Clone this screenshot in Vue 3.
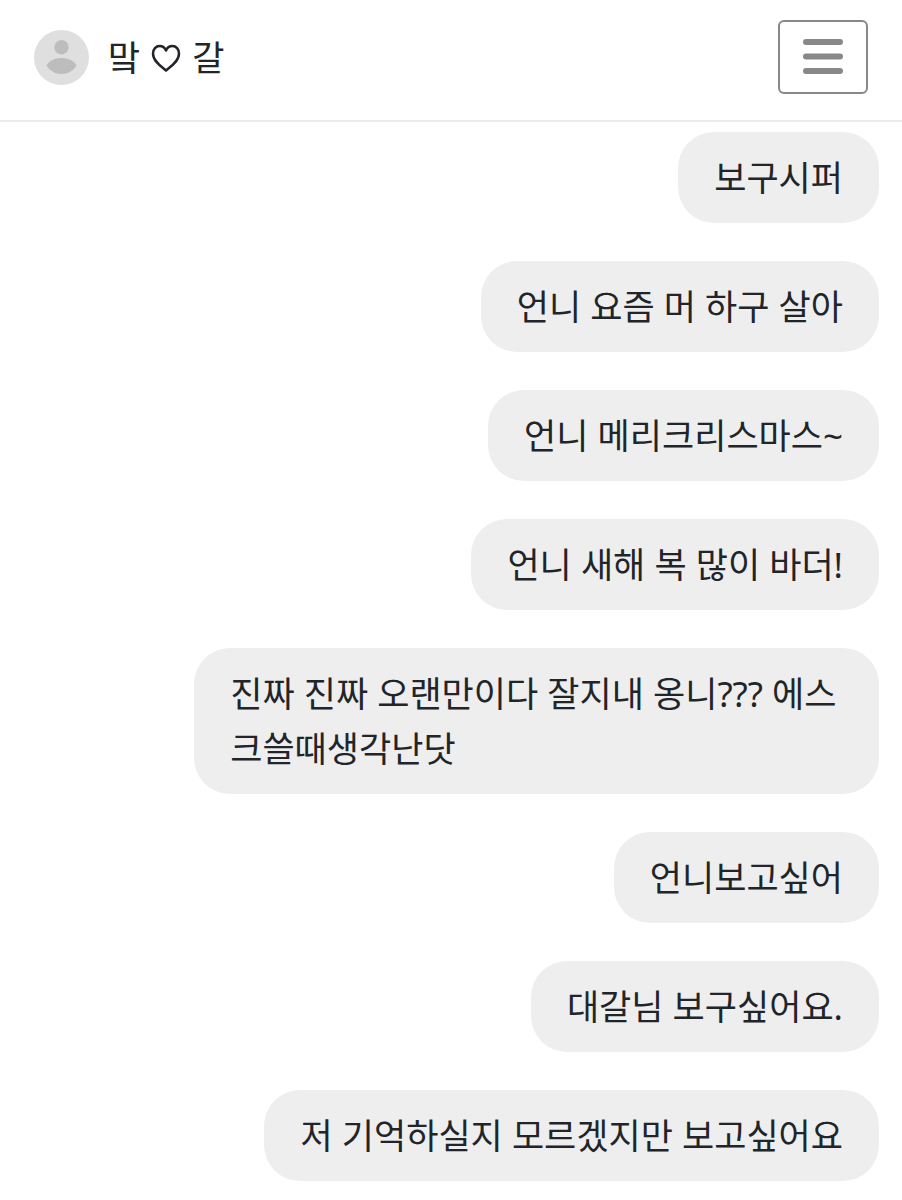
<script setup>
const messages = [
  '보구시퍼',
  '언니 요즘 머 하구 살아',
  '언니 메리크리스마스~',
  '언니 새해 복 많이 바더!',
  '진짜 진짜 오랜만이다 잘지내 옹니??? 에스크쓸때생각난닷',
  '언니보고싶어',
  '대갈님 보구싶어요.',
  '저 기억하실지 모르겠지만 보고싶어요',
]
</script>

<template>
  <div class="page">
    <header class="topbar">
      <div class="profile">
        <svg class="avatar" viewBox="0 0 55 55" aria-hidden="true">
          <circle cx="27.5" cy="27.5" r="27.5" fill="#dfdfdf" />
          <circle cx="27.5" cy="17.2" r="7.2" fill="#bdbdbd" />
          <path d="M12.500 35.500C15 30.500 21 28 27.500 28S40 30.500 42.500 35.500C39 41 34 44 27.500 44S16 41 12.500 35.500Z" fill="#bdbdbd" />
        </svg>
        <h1 class="name">
          <span>맠</span>
          <svg class="heart" viewBox="0 0 30 30" role="img" aria-label="♡">
            <path d="M15 28.500C11 25 2 19.500 2 11.500C2 7 5 4 8.500 4C11.500 4 14 6 15 8.500C16 6 18.500 4 21.500 4C25 4 28 7 28 11.500C28 19.500 19 25 15 28.500Z" />
          </svg>
          <span>갈</span>
        </h1>
      </div>
      <button class="menu" type="button" aria-label="메뉴">
        <svg viewBox="0 0 40 36" aria-hidden="true">
          <path d="M3 3H37M3 17.500H37M3 32H37" />
        </svg>
      </button>
    </header>
    <main class="thread">
      <p v-for="message in messages" :key="message" class="bubble">{{ message }}</p>
    </main>
  </div>
</template>

<style>
body {
  background: #fff;
}
</style>

<style scoped>
.page {
  font-family: "Noto Sans", "Noto Sans CJK KR", sans-serif;
  color: #212529;
}
.topbar {
  display: flex;
  align-items: center;
  justify-content: space-between;
  padding: 20px 34px 26px;
  border-bottom: 2px solid #ebebeb;
}
.profile {
  display: flex;
  align-items: center;
  gap: 19px;
}
.avatar {
  width: 55px;
  height: 55px;
}
.name {
  display: flex;
  align-items: center;
  gap: 11px;
  margin: 0;
  font-size: 35px;
  font-weight: 400;
  line-height: 55px;
}
.heart {
  width: 30px;
  height: 30px;
  fill: none;
  stroke: #212529;
  stroke-width: 2.5;
  stroke-linejoin: round;
}
.menu {
  display: flex;
  align-items: center;
  justify-content: center;
  width: 90px;
  height: 74px;
  padding: 0;
  background: #fff;
  border: 2px solid #88888a;
  border-radius: 6px;
}
.menu svg {
  width: 40px;
  height: 36px;
  fill: none;
  stroke: #88888a;
  stroke-width: 6;
  stroke-linecap: round;
}
.thread {
  display: flex;
  flex-direction: column;
  align-items: flex-end;
  gap: 38px;
  padding: 10px 23px 18px;
}
.bubble {
  box-sizing: border-box;
  max-width: 80%;
  margin: 0;
  padding: 18px 36px;
  border-radius: 36px;
  background: #eee;
  font-size: 35px;
  line-height: 55px;
  word-break: break-all;
}
</style>
